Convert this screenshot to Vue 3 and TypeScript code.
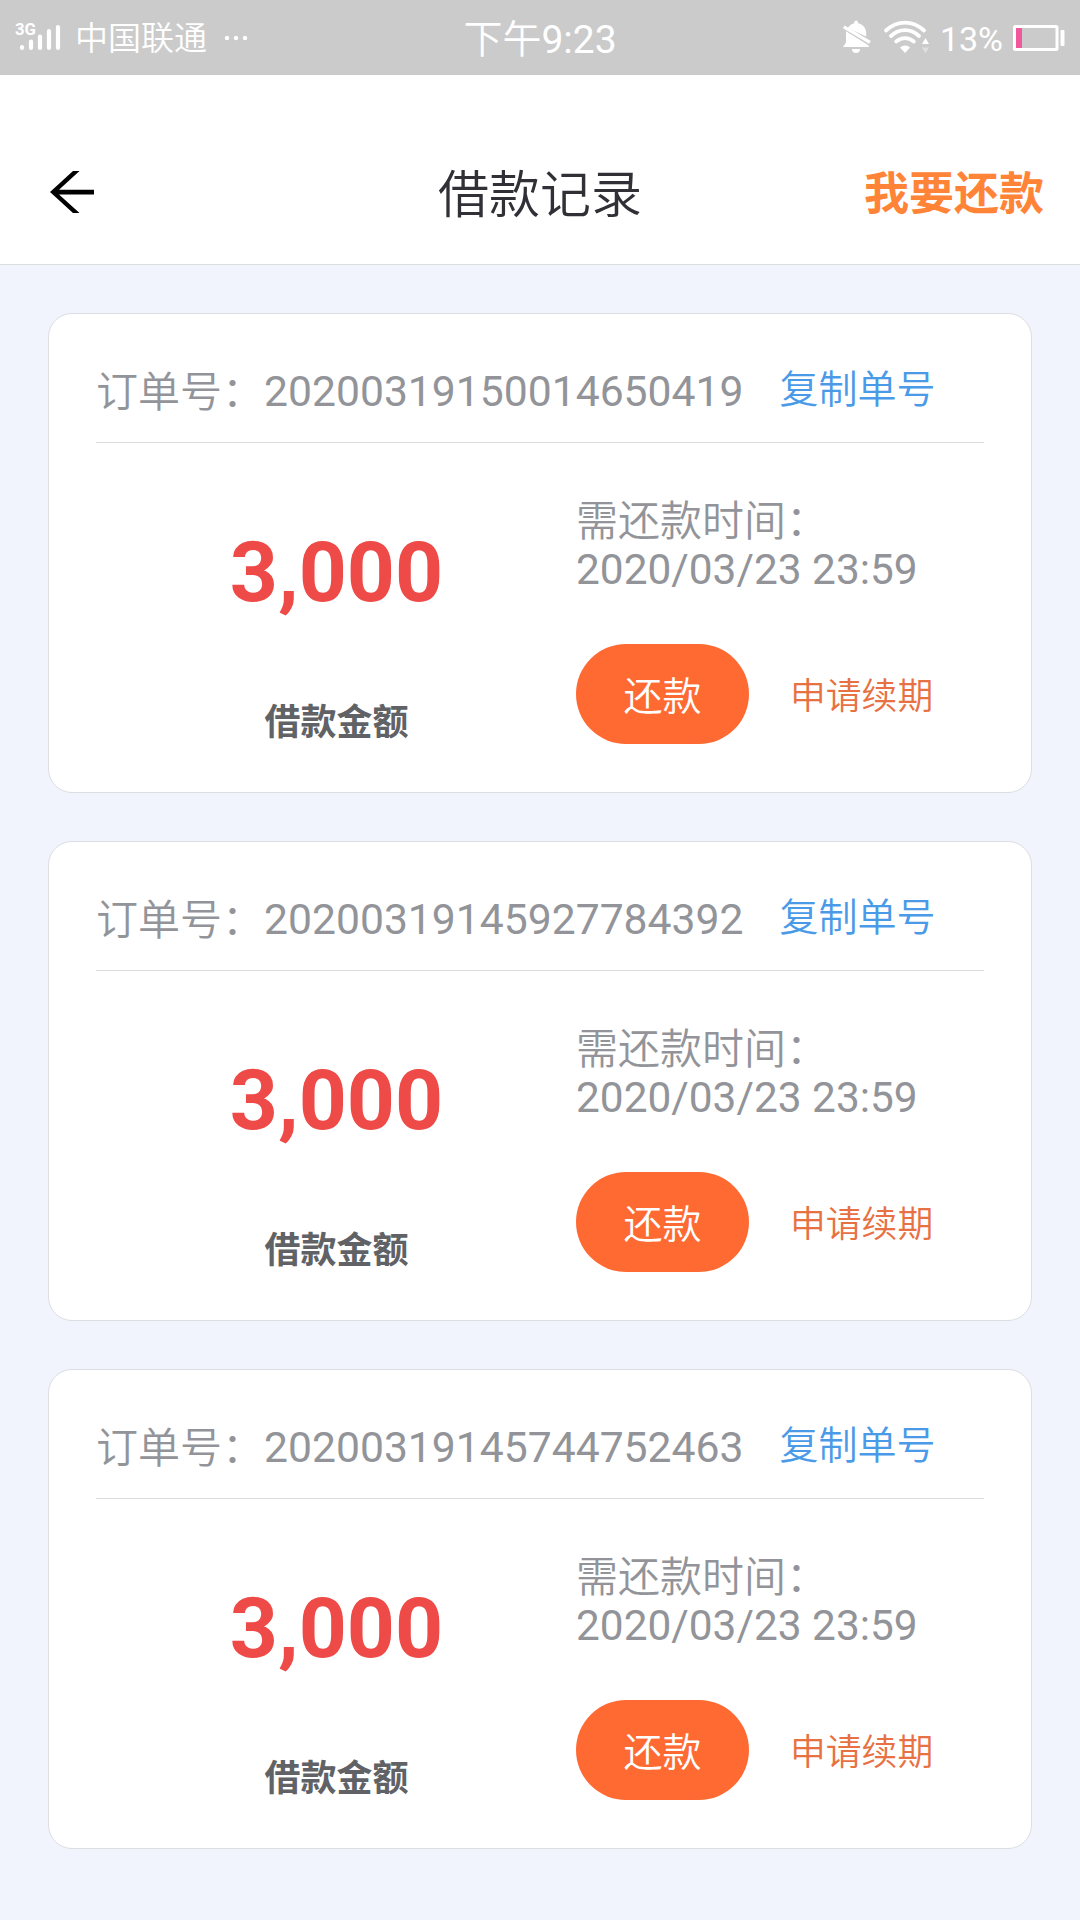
<script setup lang="ts">
interface LoanOrder {
  id: string
  amount: string
  due: string
}

const orders: LoanOrder[] = [
  { id: '20200319150014650419', amount: '3,000', due: '2020/03/23 23:59' },
  { id: '20200319145927784392', amount: '3,000', due: '2020/03/23 23:59' },
  { id: '20200319145744752463', amount: '3,000', due: '2020/03/23 23:59' },
]
</script>

<template>
  <div class="screen">
    <div class="status">
      <div class="status-left">
        <svg class="signal" width="48" height="34" viewBox="0 0 48 34">
          <text x="0" y="16" font-size="16.5" font-weight="700" fill="#fff" textLength="21" lengthAdjust="spacingAndGlyphs">3G</text>
          <g stroke="#fff" stroke-width="4.2" stroke-linecap="round">
            <path d="M7 28V29M16 22.500V29M25 17.500V29M34 12V29M43 8V29" />
          </g>
        </svg>
        <span class="carrier">中国联通</span>
        <svg class="dots" width="24" height="6" viewBox="0 0 24 6" fill="#fff">
          <circle cx="3" cy="3" r="2.2" /><circle cx="12" cy="3" r="2.2" /><circle cx="21" cy="3" r="2.2" />
        </svg>
      </div>
      <div class="clock">下午<span class="digits">9:23</span></div>
      <div class="status-right">
        <svg class="bell" width="30" height="34" viewBox="0 0 30 34" fill="#fff">
          <path d="M7 6.5C8.6 4.4 10.6 3.6 12.2 3.2V2.4a1.9 1.9 0 0 1 3.8 0v.8c5 1 8.2 4.8 8.2 10v3.2L5.6 7.9z" />
          <path d="M4 11.2 25.4 24.4l2 2.6H1l3-4.6z" />
          <path d="M1.8 6.8 28 22.3" stroke="#fff" stroke-width="3.2" />
          <path d="M10 29h8a4 4 0 0 1-8 0z" />
        </svg>
        <svg class="wifi" width="48" height="34" viewBox="0 0 48 34">
          <g fill="none" stroke="#fff" stroke-width="3.8" stroke-linecap="round">
            <path d="M3 10.5C14.5-.1 29.5-.1 41 10.5" />
            <path d="M8 16C16.5 8.2 27.5 8.2 36 16" />
            <path d="M13.2 21.5C18.5 16.9 25.5 16.9 30.8 21.5" />
          </g>
          <path d="M17 27.5C19.5 24.7 24.5 24.7 27 27.5L22 33z" fill="#fff" />
          <path d="M39 24 42.5 18 46 24z" fill="#fff" />
          <path d="M39 27.500 42.500 33.500 46 27.500z" fill="#dedede" />
        </svg>
        <span class="percent">13%</span>
        <svg width="54" height="28" viewBox="0 0 54 28">
          <rect x="2.5" y="2.5" width="42.5" height="23" rx="1" fill="none" stroke="#fff" stroke-width="3" />
          <rect x="4" y="4" width="6" height="20" fill="#f0589b" />
          <rect x="48.5" y="6" width="4" height="16" rx="1" fill="#fff" />
        </svg>
      </div>
    </div>

    <header class="nav">
      <svg class="back" width="46" height="44" viewBox="0 0 46 44">
        <path d="M0 22 23 1h6.500L9 19.800H44v4.700H9L29.500 43H23z" fill="#000" />
      </svg>
      <h1 class="title">借款记录</h1>
      <a class="nav-action">我要还款</a>
    </header>

    <main class="list">
      <article v-for="order in orders" :key="order.id" class="card">
        <div class="card-head">
          <span class="order-label">订单号：</span>
          <span class="order-id">{{ order.id }}</span>
          <a class="copy">复制单号</a>
        </div>
        <div class="card-body">
          <div class="sum">
            <div class="amount">{{ order.amount }}</div>
            <div class="caption">借款金额</div>
          </div>
          <div class="detail">
            <div class="due-label">需还款时间：</div>
            <div class="due">{{ order.due }}</div>
            <div class="actions">
              <button class="pay" type="button">还款</button>
              <a class="renew">申请续期</a>
            </div>
          </div>
        </div>
      </article>
    </main>
  </div>
</template>

<style>
body {
  margin: 0;
}
</style>

<style scoped>
.screen {
  box-sizing: border-box;
  width: 1080px;
  height: 1920px;
  overflow: hidden;
  background: #f1f4fc;
  font-family: Roboto, "Noto Sans CJK SC", sans-serif;
  font-weight: 350;
  white-space: nowrap;
}
svg {
  display: block;
  flex: none;
}
.status {
  display: grid;
  grid-template-columns: 1fr auto 1fr;
  align-items: center;
  height: 75px;
  background: #cbcbcb;
  color: #fff;
}
.status-left {
  display: flex;
  align-items: center;
  padding-left: 15px;
}
.signal {
  margin-top: -4px;
}
.carrier {
  margin: 2px 0 0 12px;
  font-size: 33px;
  line-height: 40px;
}
.dots {
  margin-left: 17px;
}
.clock {
  font-size: 39px;
  line-height: 50px;
  padding-top: 4px;
}
.digits {
  font-weight: 400;
}
.status-right {
  display: flex;
  align-items: center;
  justify-content: flex-end;
  padding-right: 14px;
}
.bell {
  margin-top: -2px;
}
.wifi {
  margin: -2px 0 0 11px;
}
.percent {
  margin: 3px 9px 0 9px;
  font-size: 34px;
  font-weight: 400;
  line-height: 40px;
}
.nav {
  display: grid;
  grid-template-columns: 1fr auto 1fr;
  align-items: center;
  box-sizing: border-box;
  height: 190px;
  padding: 49px 36px 0 50px;
  background: #fff;
  border-bottom: 1px solid #dcdddf;
}
.back {
  margin-top: -4px;
}
.title {
  margin: 4px 0 0 -14px;
  color: #303036;
  font-size: 51px;
  font-weight: 350;
  line-height: 60px;
}
.nav-action {
  justify-self: end;
  padding-top: 1px;
  color: #ff8437;
  font-size: 45px;
  font-weight: 700;
  line-height: 60px;
}
.list {
  display: flex;
  flex-direction: column;
  gap: 48px;
  padding: 48px;
}
.card {
  box-sizing: border-box;
  height: 480px;
  padding: 0 47px;
  background: #fff;
  border: 1px solid #dcdee2;
  border-radius: 24px;
}
.card-head {
  display: flex;
  align-items: center;
  box-sizing: border-box;
  height: 129px;
  padding-top: 26px;
  border-bottom: 1px solid #dcdddf;
  color: #929499;
  font-size: 42px;
  line-height: 50px;
}
.order-label {
  padding-top: 3px;
}
.order-id {
  font-size: 42.67px;
  font-weight: 400;
}
.copy {
  margin: -2px 0 0 36px;
  color: #4a9ae8;
  font-size: 39px;
}
.card-body {
  display: flex;
}
.sum {
  width: 480px;
  padding-left: 1px;
  box-sizing: border-box;
  text-align: center;
}
.amount {
  margin-top: 80px;
  color: #ee4b48;
  font-size: 84px;
  font-weight: 700;
  line-height: 100px;
}
.caption {
  margin-top: 78px;
  color: #606266;
  font-size: 36px;
  font-weight: 700;
  line-height: 44px;
}
.detail {
  padding-top: 54px;
  color: #929499;
  font-size: 42px;
  line-height: 49px;
}
.due {
  margin-top: -1px;
  font-size: 42.4px;
  font-weight: 400;
}
.actions {
  display: flex;
  align-items: center;
  margin-top: 50px;
}
.pay {
  width: 173px;
  height: 100px;
  padding: 0 0 2px;
  border: 0;
  border-radius: 50px;
  background: #ff6a33;
  color: #fff;
  font-family: inherit;
  font-size: 39px;
  font-weight: 350;
}
.renew {
  margin: 7px 0 0 41px;
  color: #e77143;
  font-size: 35.8px;
}
</style>
